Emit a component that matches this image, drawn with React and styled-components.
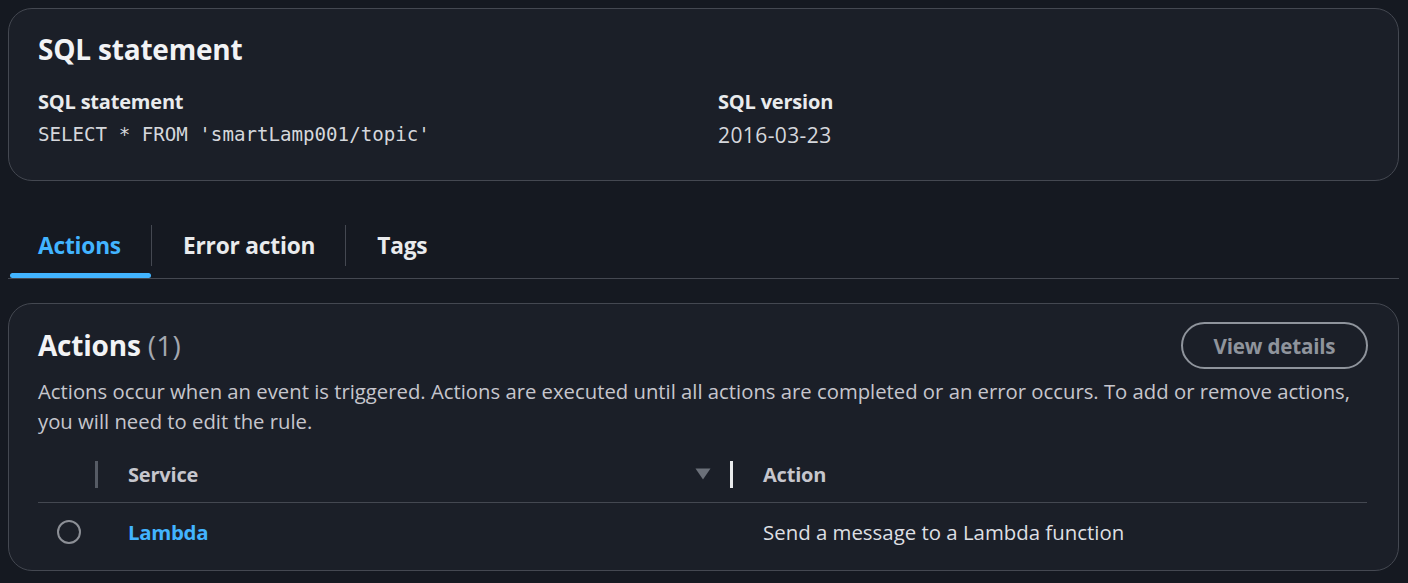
import React from "react";
import styled, { createGlobalStyle } from "styled-components";

const GlobalStyle = createGlobalStyle`
  html, body {
    margin: 0;
    padding: 0;
    background: #151921;
  }
  body {
    font-family: "Open Sans", "Noto Sans", Arial, sans-serif;
    color: #e9ebed;
    -webkit-font-smoothing: antialiased;
  }
  * { box-sizing: border-box; }
`;

const Page = styled.div`
  display: flex;
  flex-direction: column;
  padding: 8px 9px 0 8px;
  width: 1408px;
`;

const Card = styled.section`
  background: #1b1f28;
  border: 1px solid #444851;
  border-radius: 24px;
  padding: ${(p) => p.$pad};
  margin-top: ${(p) => p.$mt || "0px"};
`;

const H2 = styled.h2`
  margin: 0;
  font-size: 28px;
  line-height: 33px;
  font-weight: 700;
  color: #f2f3f5;
  letter-spacing: -0.2px;
`;

const Count = styled.span`
  font-weight: 400;
  color: #a4a8b0;
  letter-spacing: 0.3px;
`;

const KVGrid = styled.div`
  display: grid;
  grid-template-columns: 1fr 1fr;
  column-gap: 29px;
  margin-top: 21px;
`;

const KV = styled.div`
  display: flex;
  flex-direction: column;
  gap: 3px;
`;

const Label = styled.div`
  font-size: 20px;
  line-height: 30px;
  font-weight: 700;
  color: #e9ebed;
  letter-spacing: -0.2px;
`;

const Value = styled.div`
  line-height: 30px;
  color: #d5d7dc;
  font-family: ${(p) => (p.$mono ? '"DejaVu Sans Mono", "Liberation Mono", monospace' : "inherit")};
  font-size: ${(p) => (p.$mono ? "19.15px" : "21px")};
  letter-spacing: ${(p) => (p.$mono ? "0px" : "0.4px")};
`;

const TabBar = styled.div`
  display: flex;
  align-items: flex-start;
  margin-top: 36px;
  border-bottom: 1px solid #444851;
`;

const Tab = styled.div`
  display: flex;
  flex-direction: column;
`;

const TabLabel = styled.div`
  height: 56px;
  display: flex;
  align-items: center;
  padding: ${(p) => (p.$first ? "0 30px 0 30px" : "0 30px 0 31px")};
  font-size: 22.7px;
  font-weight: 700;
  color: ${(p) => (p.$active ? "#42b4ff" : "#e9ebed")};
  letter-spacing: -0.2px;
`;

const TabIndicator = styled.div`
  height: 5px;
  margin-left: 2px;
  border-radius: 3px;
  background: ${(p) => (p.$active ? "#42b4ff" : "transparent")};
`;

const TabDivider = styled.div`
  width: 1px;
  height: 41px;
  margin-top: 8px;
  background: #444851;
`;

const HeaderRow = styled.div`
  display: flex;
  align-items: center;
  justify-content: space-between;
  height: 47px;
`;

const Button = styled.button`
  height: 47px;
  width: 187px;
  border: 2px solid #8f949c;
  border-radius: 24px;
  background: transparent;
  color: #8f949c;
  font-family: inherit;
  font-size: 20.6px;
  font-weight: 700;
  letter-spacing: -0.2px;
  margin-right: 1px;
  cursor: pointer;
`;

const Description = styled.p`
  margin: 7px 0 0 0;
  font-size: 20.3px;
  line-height: 30px;
  color: #c6c6cd;
`;

const Table = styled.div`
  margin-top: 10px;
  margin-right: 2px;
  display: grid;
  grid-template-columns: 57px 635px 1fr;
`;

const HeadCell = styled.div`
  height: 57px;
  display: flex;
  align-items: center;
  border-bottom: 1px solid #444851;
  padding-right: ${(p) => p.$pr || "0px"};
  font-size: 20px;
  font-weight: 700;
  color: #c6c6cd;
  letter-spacing: -0.2px;
`;

const ColDivider = styled.div`
  width: 3px;
  height: 27px;
  margin-right: 30px;
  background: ${(p) => (p.$bright ? "#e9ebed" : "#565b65")};
`;

const HeadText = styled.span`
  flex: 1;
`;

const Cell = styled.div`
  height: 58px;
  display: flex;
  align-items: center;
  padding-left: ${(p) => p.$pl || "33px"};
  font-size: 20.4px;
  color: #dedfe3;
`;

const Radio = styled.span`
  width: 24px;
  height: 24px;
  border: 2px solid #8c8f96;
  border-radius: 50%;
`;

const Link = styled.a`
  color: #42b4ff;
  font-weight: 700;
  text-decoration: none;
  letter-spacing: -0.3px;
`;

const SortIcon = () => (
  <svg width="16" height="12" viewBox="0 0 16 12">
    <polygon points="0.5,0.5 15.5,0.5 8,11.5" fill="#6b7079" />
  </svg>
);

export default function App() {
  return (
    <>
      <GlobalStyle />
      <Page>
        <Card $pad="24px 29px 30px 29px">
          <H2>SQL statement</H2>
          <KVGrid>
            <KV>
              <Label>SQL statement</Label>
              <Value $mono>SELECT * FROM 'smartLamp001/topic'</Value>
            </KV>
            <KV>
              <Label>SQL version</Label>
              <Value>2016-03-23</Value>
            </KV>
          </KVGrid>
        </Card>

        <TabBar>
          <Tab>
            <TabLabel $first $active>Actions</TabLabel>
            <TabIndicator $active />
          </Tab>
          <TabDivider />
          <Tab>
            <TabLabel>Error action</TabLabel>
            <TabIndicator />
          </Tab>
          <TabDivider />
          <Tab>
            <TabLabel>Tags</TabLabel>
            <TabIndicator />
          </Tab>
        </TabBar>

        <Card $pad="18px 29px 9px 29px" $mt="24px">
          <HeaderRow>
            <H2>
              Actions <Count>(1)</Count>
            </H2>
            <Button>View details</Button>
          </HeaderRow>
          <Description>
            Actions occur when an event is triggered. Actions are executed until all actions are
            completed or an error occurs. To add or remove actions, you will need to edit the rule.
          </Description>
          <Table>
            <HeadCell />
            <HeadCell $pr="19px">
              <ColDivider />
              <HeadText>Service</HeadText>
              <SortIcon />
            </HeadCell>
            <HeadCell>
              <ColDivider $bright />
              <HeadText>Action</HeadText>
            </HeadCell>
            <Cell $pl="19px">
              <Radio />
            </Cell>
            <Cell>
              <Link href="#">Lambda</Link>
            </Cell>
            <Cell>Send a message to a Lambda function</Cell>
          </Table>
        </Card>
      </Page>
    </>
  );
}
